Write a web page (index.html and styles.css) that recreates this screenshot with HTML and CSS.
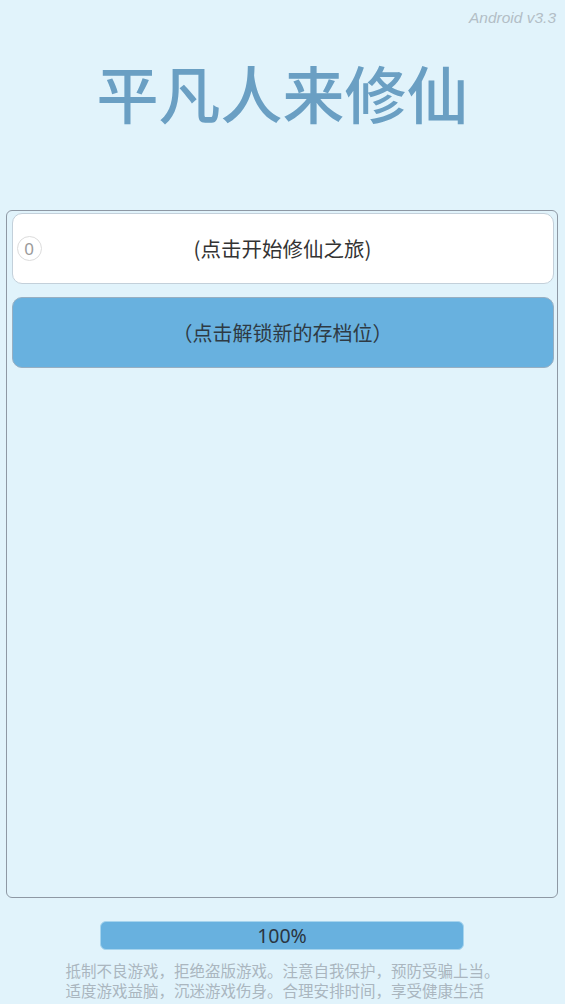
FILE: index.html
```html
<!DOCTYPE html>
<html lang="zh">
<head>
<meta charset="utf-8">
<title>平凡人来修仙</title>
<link rel="stylesheet" href="styles.css">
</head>
<body>
<div class="screen">
  <div class="version">Android v3.3</div>
  <h1 class="title">平凡人来修仙</h1>
  <div class="panel">
    <div class="slot slot-used">
      <span class="slot-num">0</span>
      <span class="slot-text">(点击开始修仙之旅)</span>
    </div>
    <div class="slot slot-new">
      <span class="slot-text">（点击解锁新的存档位）</span>
    </div>
  </div>
  <div class="progress"><span>100%</span></div>
  <div class="notice">
    <div class="notice-inner">
      <p>抵制不良游戏，拒绝盗版游戏。注意自我保护，预防受骗上当。</p>
      <p>适度游戏益脑，沉迷游戏伤身。合理安排时间，享受健康生活</p>
    </div>
  </div>
</div>
</body>
</html>
```
FILE: styles.css
```css
html, body {
  margin: 0;
  padding: 0;
  background: #e1f3fb;
}
body {
  font-family: "Noto Sans", "Noto Sans CJK SC", sans-serif;
  width: 565px;
  height: 1004px;
  overflow: hidden;
}
.screen {
  display: flex;
  flex-direction: column;
  height: 1004px;
}
.version {
  font-family: "Liberation Sans", sans-serif;
  font-style: italic;
  font-size: 15.5px;
  line-height: 18px;
  color: #b3bec6;
  text-align: right;
  padding: 9px 9px 0 0;
}
.title {
  margin: 34px 0 0 0;
  font-family: "Noto Sans CJK SC", sans-serif;
  font-weight: 500;
  font-size: 62px;
  line-height: 62px;
  color: #6a9fc3;
  text-align: center;
}
.panel {
  margin: 87px 0 0 6px;
  width: 552px;
  height: 688px;
  box-sizing: border-box;
  border: 1.5px solid #8e98a4;
  border-radius: 6px;
  padding: 2px 3.5px 0 4.5px;
  display: flex;
  flex-direction: column;
  gap: 13px;
}
.slot {
  position: relative;
  height: 71px;
  box-sizing: border-box;
  border-radius: 10px;
  display: flex;
  align-items: center;
  justify-content: center;
  font-family: "Noto Sans CJK SC", sans-serif;
  font-size: 20px;
  color: #333;
}
.slot-used {
  background: #ffffff;
  border: 1px solid #c3d0da;
}
.slot-used .slot-text {
  font-size: 20.5px;
}
.slot-new {
  background: #68b1df;
  border: 1px solid #97afc2;
  color: #2e3a44;
}
.slot-num {
  position: absolute;
  left: 4px;
  top: 50%;
  margin-top: -12.5px;
  width: 23px;
  height: 23px;
  border: 1px solid #dcdcdc;
  border-radius: 50%;
  display: flex;
  align-items: center;
  justify-content: center;
  font-family: "Noto Sans", sans-serif;
  font-size: 17px;
  color: #9a9a9a;
}
.slot-text {
  line-height: 1;
}
.progress {
  margin: 23px 0 0 100px;
  width: 364px;
  height: 29px;
  box-sizing: border-box;
  background: #68b1df;
  border: 1px solid #a6d4ee;
  border-radius: 6px;
  display: flex;
  align-items: center;
  justify-content: center;
  font-family: "Noto Sans", sans-serif;
  font-size: 19.5px;
  color: #2b3540;
}
.notice {
  margin-top: 10px;
  display: flex;
  justify-content: center;
  font-family: "Noto Sans CJK SC", sans-serif;
  font-size: 15.5px;
  line-height: 20px;
  color: #aab6bf;
}
.notice-inner {
  text-align: left;
}
.notice p {
  margin: 0;
}
```
